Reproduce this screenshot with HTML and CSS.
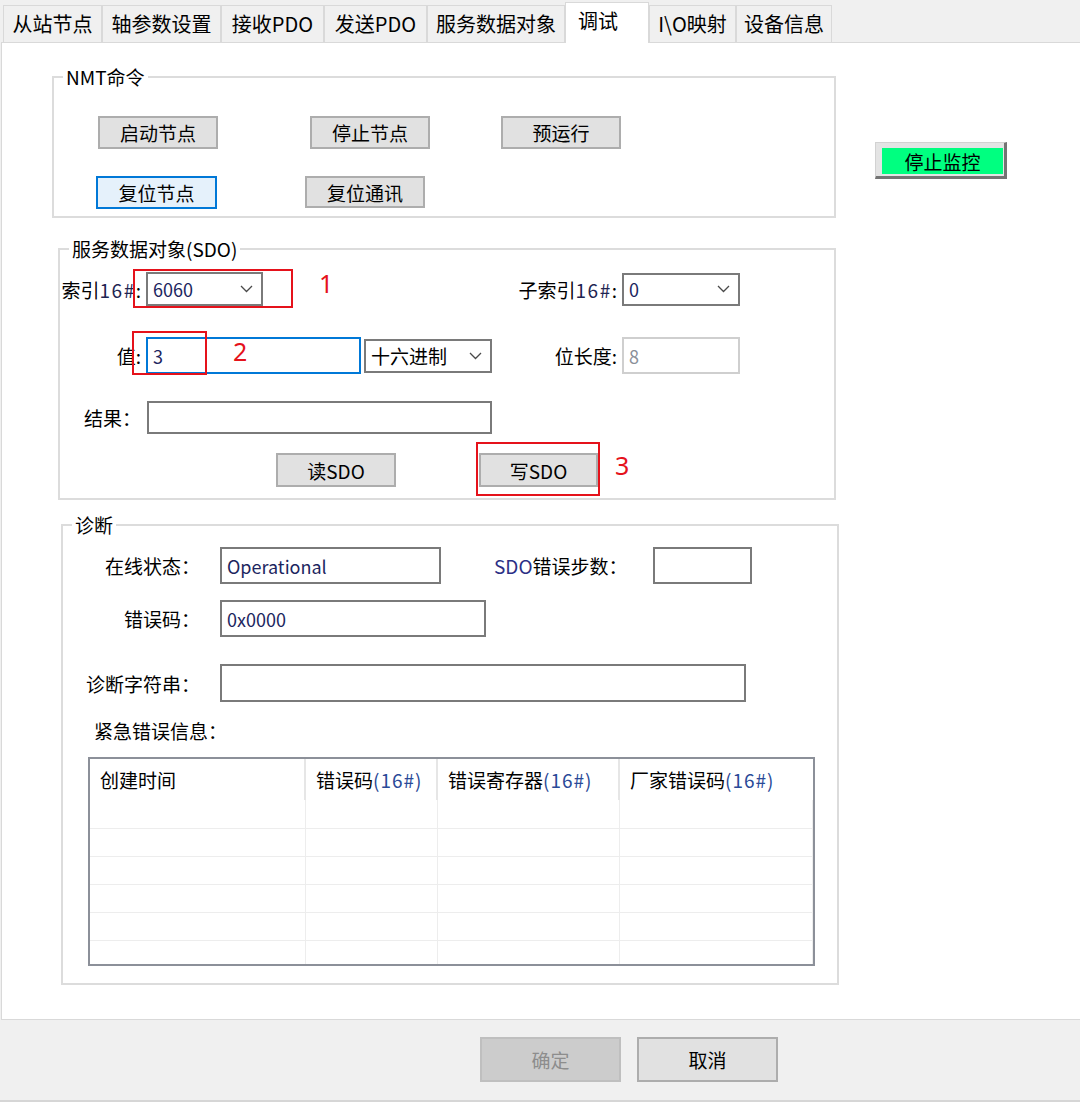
FILE: index.html
```html
<!DOCTYPE html>
<html lang="zh-CN">
<head>
    <meta charset="UTF-8">
    <title>调试</title>
    <link rel="stylesheet" href="styles.css">
</head>
<body>
    <div class="tabs">
        <div class="tab">从站节点</div>
        <div class="tab">轴参数设置</div>
        <div class="tab">接收PDO</div>
        <div class="tab">发送PDO</div>
        <div class="tab">服务数据对象</div>
        <div class="tab active">调试</div>
        <div class="tab">I\O映射</div>
        <div class="tab">设备信息</div>
    </div>

    <div class="panel">
        <div class="top-row">
            <div class="group nmt">
                <span class="group-title">NMT命令</span>
                <div class="nmt-row">
                    <button class="btn btn-start">启动节点</button>
                    <button class="btn btn-stop">停止节点</button>
                    <button class="btn btn-pre">预运行</button>
                </div>
                <div class="nmt-row row-2">
                    <button class="btn btn-reset focus">复位节点</button>
                    <button class="btn btn-comm">复位通讯</button>
                </div>
            </div>
            <button class="monitor"><span class="monitor-face">停止监控</span></button>
        </div>

        <div class="group sdo">
            <span class="group-title">服务数据对象(SDO)</span>
            <div class="sdo-row">
                <span class="lbl">索引<span class="num">16#</span>:</span>
                <div class="select sel-index"><span>6060</span><svg width="13" height="8" viewBox="0 0 13 8"><polyline points="1,1 6.5,6.5 12,1"/></svg></div>
                <span class="lbl">子索引<span class="num">16#</span>:</span>
                <div class="select sel-sub"><span>0</span><svg width="13" height="8" viewBox="0 0 13 8"><polyline points="1,1 6.5,6.5 12,1"/></svg></div>
            </div>
            <div class="sdo-row row-b">
                <span class="lbl">值:</span>
                <div class="pair">
                    <input class="field field-value active" type="text" value="3">
                    <div class="select sel-fmt"><span class="txt">十六进制</span><svg width="13" height="8" viewBox="0 0 13 8"><polyline points="1,1 6.5,6.5 12,1"/></svg></div>
                </div>
                <span class="lbl">位长度:</span>
                <input class="field field-bits disabled" type="text" value="8" disabled>
            </div>
            <div class="sdo-row row-c">
                <span class="lbl">结果：</span>
                <input class="field field-result" type="text" value="">
            </div>
            <div class="sdo-btns">
                <button class="btn btn-read">读SDO</button>
                <button class="btn btn-write">写SDO</button>
            </div>

            <div class="mark mark-1"></div>
            <div class="mark mark-2"></div>
            <div class="mark mark-3"></div>
            <span class="mark-num n1">1</span>
            <span class="mark-num n2">2</span>
            <span class="mark-num n3">3</span>
        </div>

        <div class="group diag">
            <span class="group-title">诊断</span>
            <div class="diag-row">
                <span class="dlbl">在线状态：</span>
                <input class="field f-state" type="text" value="Operational">
                <span class="dlbl2"><span class="sdo-tag">SDO</span>错误步数：</span>
                <input class="field f-steps" type="text" value="">
            </div>
            <div class="diag-row row-2">
                <span class="dlbl">错误码：</span>
                <input class="field f-code" type="text" value="0x0000">
            </div>
            <div class="diag-row row-3">
                <span class="dlbl">诊断字符串：</span>
                <input class="field f-string" type="text" value="">
            </div>
            <div class="emg-label">紧急错误信息：</div>
            <div class="grid-box">
                <table class="emg-table">
                    <colgroup>
                        <col class="c1"><col class="c2"><col class="c3"><col>
                    </colgroup>
                    <thead>
                        <tr>
                            <th>创建时间</th>
                            <th>错误码<span class="hex">(16#)</span></th>
                            <th>错误寄存器<span class="hex">(16#)</span></th>
                            <th>厂家错误码<span class="hex">(16#)</span></th>
                        </tr>
                    </thead>
                    <tbody>
                        <tr><td></td><td></td><td></td><td></td></tr>
                        <tr><td></td><td></td><td></td><td></td></tr>
                        <tr><td></td><td></td><td></td><td></td></tr>
                        <tr><td></td><td></td><td></td><td></td></tr>
                        <tr><td></td><td></td><td></td><td></td></tr>
                        <tr><td></td><td></td><td></td><td></td></tr>
                    </tbody>
                </table>
            </div>
        </div>
    </div>

    <div class="footer">
        <button class="btn btn-ok" disabled>确定</button>
        <button class="btn btn-cancel">取消</button>
    </div>
</body>
</html>
```

FILE: styles.css
```css
* { box-sizing: border-box; margin: 0; padding: 0; }
body { width: 1080px; height: 1102px; overflow: hidden; background: #f0f0f0; color: #000; font-family: "Noto Sans CJK SC", "Noto Sans", sans-serif; font-size: 19px; line-height: 1.2; }
button, input { font-family: inherit; font-size: 19px; color: inherit; }

/* tab strip */
.tabs { position: relative; z-index: 1; display: grid; grid-template-columns: 99px 119px 103px 103px 138px 84px 87px 96px; align-items: start; height: 43px; margin-bottom: -1px; padding: 2px 0 0 3px; }
.tab { display: flex; align-items: center; justify-content: center; height: 37px; margin-top: 3px; background: #f0f0f0; border: 1px solid #d9d9d9; border-bottom: none; font-size: 20px; line-height: 1; white-space: nowrap; }
.tab.active { height: 41px; margin-top: 0; background: #fff; justify-content: flex-start; align-items: flex-start; padding: 8px 0 0 12px; }

.panel { position: relative; height: 978px; margin-left: 1px; background: #fff; border: 1px solid #d9d9d9; border-right: none; }

/* group boxes */
.group { position: relative; border: 2px solid #dcdcdc; }
.group-title { position: absolute; top: -12px; left: 9px; padding: 0 3px; background: #fff; line-height: 22px; white-space: nowrap; }

.btn { width: 120px; height: 33px; background: #e1e1e1; border: 2px solid #adadad; line-height: 1; padding: 0; }
.btn.focus { background: #e5f1fb; border-color: #0078d7; }

.top-row { display: flex; align-items: flex-start; margin: 33px 0 0 50px; }
.nmt { width: 784px; height: 142px; padding-top: 38px; }
.nmt-row { display: flex; }
.nmt-row.row-2 { margin-top: 27px; }
.btn-start { margin-left: 44px; }
.btn-stop { margin-left: 92px; }
.btn-pre { margin-left: 71px; }
.btn-reset { margin-left: 42px; width: 121px; }
.btn-comm { margin-left: 88px; height: 32px; }

.monitor { display: block; width: 132px; height: 37px; margin: 66px 0 0 39px; padding: 5px 2px 3px 6px; background: #e4e4e4; border: none; border-top: 1px solid #d2d2d2; border-left: 1px solid #d2d2d2; border-right: 3px solid #747474; border-bottom: 3px solid #747474; }
.monitor-face { display: flex; align-items: center; justify-content: center; width: 121px; height: 26px; background: #00ff80; line-height: 1; }

/* SDO */
.sdo { width: 778px; height: 252px; margin: 30px 0 0 56px; padding-top: 22px; }
.sdo-row { display: grid; grid-template-columns: 86px 346px 130px 118px; align-items: center; }
.sdo-row.row-b { margin-top: 31px; }
.sdo-row.row-c { margin-top: 27px; }
.lbl { text-align: right; padding-right: 5px; white-space: nowrap; line-height: 1; }
.num { color: #1f2552; letter-spacing: 1.5px; }

.select { display: flex; align-items: center; justify-content: space-between; background: #fff; border: 2px solid #7a7a7a; padding: 0 8px 0 5px; font-size: 18px; color: #1c2660; line-height: 1; }
.select .txt { color: #000; font-size: 19px; }
.select svg { fill: none; stroke: #4a4a4a; stroke-width: 1.3; }
.sel-index { width: 117px; height: 34px; }
.sel-sub { width: 118px; height: 33px; }
.sel-fmt { width: 128px; height: 34px; }

.pair { display: flex; align-items: center; gap: 3px; }
.field { display: block; background: #fff; border: 2px solid #7a7a7a; padding: 0 5px; font-size: 18px; color: #1c2660; outline: none; }
.field.active { border-color: #0078d7; }
.field.disabled { border-color: #cfcfcf; color: #8a8f99; -webkit-text-fill-color: #8a8f99; background: #fff; }
.field-value { width: 215px; height: 37px; }
.field-bits { width: 118px; height: 37px; }
.field-result { width: 345px; height: 33px; margin-left: 1px; }

.sdo-btns { display: flex; margin: 19px 0 0 216px; }
.btn-read { height: 34px; }
.btn-write { width: 119px; height: 34px; margin-left: 83px; }

/* annotation marks drawn over the form */
.mark { position: absolute; border: 2px solid #e5121b; }
.mark-1 { left: 73px; top: 19px; width: 160px; height: 39px; }
.mark-2 { left: 72px; top: 81px; width: 75px; height: 44px; }
.mark-3 { left: 416px; top: 192px; width: 124px; height: 54px; }
.mark-num { position: absolute; color: #e5121b; font-family: "Noto Sans", sans-serif; font-size: 25px; line-height: 25px; }
.n1 { left: 259px; top: 21px; }
.n2 { left: 173px; top: 89px; }
.n3 { left: 555px; top: 203px; }

/* diagnostics */
.diag { width: 778px; height: 461px; margin: 24px 0 0 59px; padding-top: 21px; }
.diag-row { display: flex; align-items: center; }
.diag-row.row-2 { margin-top: 16px; }
.diag-row.row-3 { margin-top: 27px; }
.dlbl { width: 137px; margin-right: 20px; text-align: right; white-space: nowrap; line-height: 1; }
.dlbl2 { width: 159px; margin-left: 53px; white-space: nowrap; line-height: 1; }
.sdo-tag { color: #2c2f86; }
.f-state { width: 221px; height: 37px; }
.f-steps { width: 99px; height: 37px; }
.f-code { width: 266px; height: 37px; }
.f-string { width: 526px; height: 38px; }
.emg-label { margin: 18px 0 0 31px; line-height: 22px; }

.grid-box { width: 727px; height: 209px; margin: 15px 0 0 25px; border: 2px solid #8c9099; overflow: hidden; }
.emg-table { width: 100%; border-collapse: collapse; table-layout: fixed; }
.emg-table .c1 { width: 215px; }
.emg-table .c2 { width: 132px; }
.emg-table .c3 { width: 182px; }
.emg-table thead tr { height: 41px; }
.emg-table th { text-align: left; font-weight: normal; padding-left: 10px; border-right: 2px solid #e6e6e6; white-space: nowrap; line-height: 1; }
.emg-table th:last-child { border-right: none; }
.emg-table tbody tr { height: 28px; }
.emg-table td { border-right: 1px solid #ededed; border-bottom: 1px solid #ededed; }
.hex { color: #2a4a98; letter-spacing: 1px; }

/* dialog buttons */
.footer { display: flex; gap: 16px; height: 82px; padding: 17px 0 0 480px; border-bottom: 2px solid #d6d6d6; }
.footer .btn { width: 141px; height: 45px; }
.btn-ok { background: #cccccc; border-color: #bfbfbf; color: #8d8d8d; }
```
